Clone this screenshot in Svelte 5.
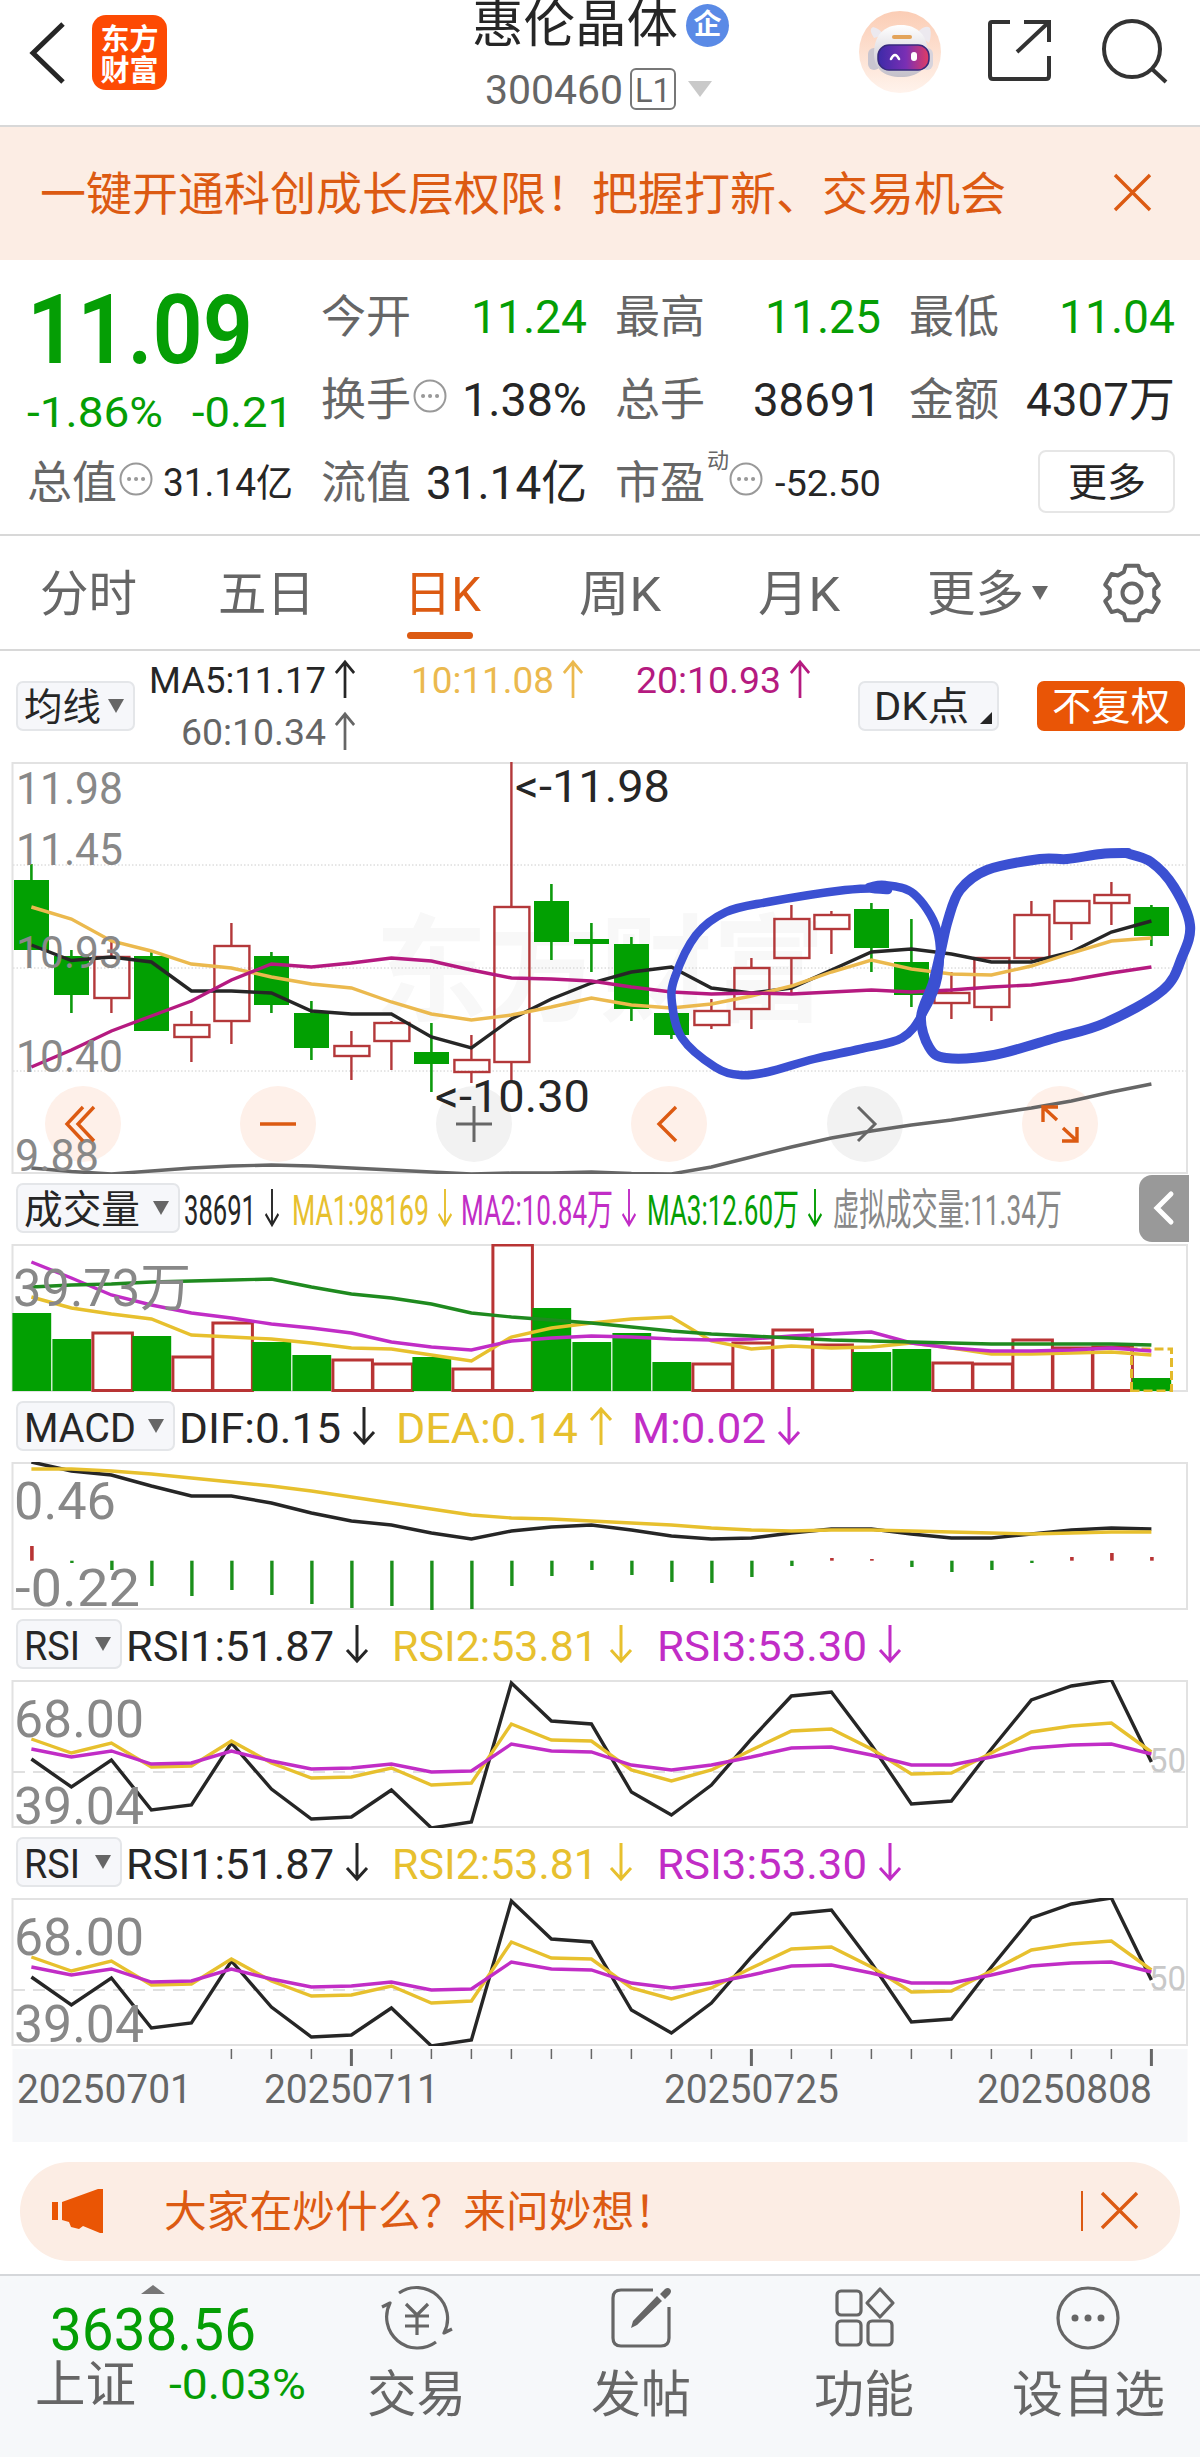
<script>
// x of the n-th trading day
const dayX = i => 31.4 + i * 40;

const line = ys => ys.map((y, i) => dayX(i) + "," + y).join(" ");

// closed smooth curve through points (catmull-rom)
function loop(pts)
{
	const n = pts.length;
	let d = "M" + pts[0];
	for(let i=0;i<n-1;i++)
	{
		const p0 = pts[Math.max(i-1,0)], p1 = pts[i], p2 = pts[i+1], p3 = pts[Math.min(i+2,n-1)];
		d += ` C${p1[0]+(p2[0]-p0[0])/6} ${p1[1]+(p2[1]-p0[1])/6} ${p2[0]-(p3[0]-p1[0])/6} ${p2[1]-(p3[1]-p1[1])/6} ${p2[0]} ${p2[1]}`;
	}
	return d;
}

function gear(teeth, r1, r2)
{
	const pts = [];
	for(let i=0;i<teeth;i++)
	{
		const a = -90 + i*360/teeth;
		[[-21,r2],[-13,r1],[13,r1],[21,r2]].forEach(([o,r]) => {
			const t = (a+o)*Math.PI/180;
			pts.push((r*Math.cos(t)).toFixed(1) + "," + (r*Math.sin(t)).toFixed(1));
		});
	}
	return pts.join(" ");
}

// [up?, body top, body bottom, high, low]
const candles = [
	[0,880,950,864,950],[0,956,995,950,1013],[1,957,998,941,1013],[0,956,1031,952,1031],[1,1025,1037,1011,1062],
	[1,946,1021,923,1044],[0,956,1005,952,1013],[0,1013,1048,1001,1060],[1,1046,1056,1031,1080],[1,1023,1041,1021,1070],
	[0,1052,1064,1023,1092],[1,1060,1072,1035,1083],[1,907,1062,762,1082],[0,901,942,884,960],[0,939,944,923,972],
	[0,944,1009,937,1021],[0,1013,1035,1013,1039],[1,1011,1025,999,1029],[1,968,1009,958,1029],[1,919,958,905,993],
	[1,915,929,911,954],[0,909,948,903,972],[0,962,995,919,1007],[1,993,1003,972,1019],[1,958,1007,958,1021],
	[1,915,958,901,960],[1,901,923,901,940],[1,895,903,882,925],[0,907,936,905,946]
];
const ma5 = [945,960.5,957,962,991,991,993,1011,1014,1014,1037,1048,1019,999,983,972,967,988,993,988,970,952,949,954,962,962,952,932,921];
const ma10 = [907,919,941,951,964,968,977,984,988,1002,1014,1020,1015,1007,998,1005,1008,1004,996,986,972,960,969,974,975,966,953,941,938];
const ma20 = [1067,1050,1031,1016,1001,980,964,967,963,958,961,970,978,979,981,987,992,994,993,994,992,990,992,990,987,985,980,973,967];
const ma60 = [1168,1171.5,1174,1171,1168,1166,1165,1166,1168,1170,1172,1174,1173,1173,1172,1173.5,1174,1167,1157,1147,1138,1131,1125,1120,1114,1108,1101,1092,1084];

const volTop = [1313,1339,1333,1336,1357,1323,1342,1355,1360,1364,1357,1369,1245,1308,1342,1333,1362,1364,1343,1330,1345,1352,1349,1363,1364,1340,1348,1347,1378];
const vol1 = [1297,1308,1314,1319,1335,1337,1339,1343,1348,1349,1355,1361,1337,1328,1323,1319,1317,1341,1349,1346,1348,1347,1343,1348,1354,1354,1353,1352,1355];
const vol2 = [1262,1278,1295,1305,1313,1318,1324,1328,1333,1342,1347,1350,1341,1338,1336,1337,1339,1340,1339,1336,1334,1332,1343,1348,1351,1351,1350,1348,1351];
const vol3 = [1287,1285,1284,1282,1281,1280,1279,1287,1294,1298,1304,1313,1317,1320,1323,1327,1331,1334,1336,1338,1340,1341,1342,1343,1344,1344,1344,1344,1345];

const dif = [1462,1471,1475,1486,1496,1496,1503,1513,1521,1525,1533,1539,1531,1527,1525,1530,1536,1539,1538,1533,1529,1529,1534,1538,1538,1534,1530,1528,1529];
const dea = [1469,1469,1471,1474,1478,1482,1486,1491,1497,1503,1509,1515,1518,1519,1521,1523,1525,1528,1530,1531,1530,1530,1531,1532,1533,1534,1533,1532,1532];
const macd = [1546,1563,1570,1586,1596,1590,1595,1604,1608,1606,1610,1609,1586,1576,1570,1575,1582,1583,1577,1566,1558,1559,1567,1572,1570,1563,1557,1553,1557];

const rsi1 = [1759,1787,1760,1810,1805,1743,1789,1819,1817,1790,1828,1822,1683,1721,1724,1792,1815,1785,1739,1696,1692,1745,1804,1801,1749,1700,1686,1680,1762];
const rsi2 = [1739,1753,1743,1767,1766,1741,1763,1778,1777,1768,1785,1783,1724,1740,1741,1770,1781,1770,1750,1731,1729,1749,1774,1773,1753,1732,1726,1723,1752];
const rsi3 = [1749,1757,1751,1764,1763,1751,1761,1769,1768,1764,1772,1771,1744,1751,1752,1765,1770,1765,1757,1748,1747,1755,1765,1765,1757,1748,1745,1744,1754];

const loopA = [[888,890],[868,888],[885,885],[914,894],[937,930],[938,977],[923,1013],[902,1038],[860,1049],[814,1059],[768,1072],[740,1075],[715,1067],[682,1038],[672,1003],[675,977],[696,935],[726,912],[768,902],[845,890],[885,888]];
const loopB = [[1126,853],[1151,862],[1174,887],[1190,925],[1182,957],[1163,990],[1105,1023],[1055,1038],[994,1055],[946,1058],[929,1047],[921,1017],[933,983],[941,950],[948,920],[960,890],[987,870],[1040,859],[1067,859],[1101,854],[1128,853]];

const prices = [["11.98",804,107],["11.45",865,107],["10.93",968,107],["10.40",1072,107]];

// slot = width taken in the header line, w = width of the text
const panels = [
	{ name: "成交量", nameW: 116, chip: 164, cls: "vol", items: [
		{ t: "38691", w: 72, slot: 108, c: "black", dir: "down" },
		{ t: "MA1:98169", w: 137, slot: 169, c: "yellow", dir: "down" },
		{ t: "MA2:10.84万", w: 152, slot: 186, c: "purple", dir: "down" },
		{ t: "MA3:12.60万", w: 152, slot: 186, c: "green", dir: "down" },
		{ t: "虚拟成交量:11.34万", w: 229, slot: 230, c: "grey" }
	]},
	{ name: "MACD", nameW: 112, chip: 159, items: [
		{ t: "DIF:0.15", w: 162, slot: 217, c: "black", dir: "down" },
		{ t: "DEA:0.14", w: 182, slot: 236, c: "yellow", dir: "up" },
		{ t: "M:0.02", w: 134, slot: 170, c: "purple", dir: "down" }
	]},
	{ name: "RSI", nameW: 56, chip: 106 },
	{ name: "RSI", nameW: 56, chip: 106 }
];
const rsiItems = [
	{ t: "RSI1:51.87", w: 208, slot: 265.5, c: "black", dir: "down" },
	{ t: "RSI2:53.81", w: 206, slot: 265.5, c: "yellow", dir: "down" },
	{ t: "RSI3:53.30", w: 210, slot: 265.5, c: "purple", dir: "down" }
];

const dates = [["20250701",17],["20250711",264],["20250725",664],["20250808",977]];
</script>

<!-- text squeezed or stretched to width w -->
{#snippet fit(text, w, size, c = "")}
	<svg class="fit {c}" width={w} height={size}><text x="0" y={size*0.88} font-size={size} textLength={w} lengthAdjust="spacingAndGlyphs">{text}</text></svg>
{/snippet}

{#snippet arrow(dir, c, w = 22)}
	<svg class="arrow {c}" width={w} height="38" viewBox="0 0 22 38" preserveAspectRatio="none"><path d={dir=="up" ? "M11 38V2M1 13L11 2L21 13" : "M11 0V36M1 25L11 36L21 25"}/></svg>
{/snippet}

{#snippet more()}
	<svg class="more" width="34" height="34" viewBox="0 0 34 34"><circle cx="17" cy="17" r="15.5"/><path d="M10 17h.1M17 17h.1M24 17h.1"/></svg>
{/snippet}

{#snippet tri()}
	<svg class="tri" width="16" height="14" viewBox="0 0 16 14"><path d="M0 0H16L8 14Z"/></svg>
{/snippet}

<main>
	<header>
		<svg class="back" width="38" height="62" viewBox="0 0 38 62"><path d="M34 2L4 31L34 60"/></svg>
		<div class="logo"><span>东方</span><span>财富</span></div>
		<div class="title">
			<div class="name">{@render fit("惠伦晶体", 206, 51)}<b class="badge">企</b></div>
			<div class="code">{@render fit("300460", 138, 40)}<span class="level">{@render fit("L1", 36, 34)}</span>
				<svg width="24" height="16" viewBox="0 0 24 16"><path d="M0 0H24L12 16Z" fill="#c9c9c9"/></svg>
			</div>
		</div>
		<svg class="robot" width="82" height="82" viewBox="0 0 82 82">
			<defs>
				<linearGradient id="halo" x1="0" y1="0" x2="0" y2="1"><stop offset="0" stop-color="#fbcdb5"/><stop offset="1" stop-color="#fff3ec"/></linearGradient>
				<linearGradient id="visor" x1="0" y1="0" x2="1" y2="0"><stop offset="0" stop-color="#3d2aa8"/><stop offset=".55" stop-color="#7a2fb4"/><stop offset="1" stop-color="#e23c63"/></linearGradient>
				<linearGradient id="shell" x1="0" y1="0" x2="0" y2="1"><stop offset="0" stop-color="#fff"/><stop offset="1" stop-color="#c3bfc9"/></linearGradient>
			</defs>
			<circle cx="41" cy="41" r="41" fill="url(#halo)"/>
			<path d="M15 27Q9 18 14 16Q20 17 25 24ZM58 22Q66 13 71 17Q73 24 70 32Z" fill="#ece9ef"/>
			<rect x="9" y="37" width="12" height="22" rx="6" fill="#c9c5cf"/>
			<rect x="62" y="37" width="12" height="22" rx="6" fill="#d7d3dc"/>
			<path d="M42 14C58 14 69 24 69 43C69 58 58 66 42 66C25 66 15 58 15 43C15 24 25 14 42 14Z" fill="url(#shell)"/>
			<rect x="33" y="24" width="20" height="4" rx="2" fill="#e3a45b"/>
			<rect x="19" y="34" width="51" height="25" rx="11" fill="url(#visor)" stroke="#372a7e" stroke-width="1.5"/>
			<path d="M32 48Q36 40 40 48" fill="none" stroke="#fff" stroke-width="2.6" stroke-linecap="round"/>
			<rect x="52" y="41" width="6" height="9" rx="3" fill="#fff"/>
		</svg>
		<svg class="share" width="66" height="66" viewBox="0 0 66 66"><path d="M24 4H6Q4 4 4 6V58Q4 61 7 61H60Q63 61 63 58V38M38 4H63V24M63 4L31 34"/></svg>
		<svg class="search" width="68" height="66" viewBox="0 0 68 66"><circle cx="31" cy="31" r="28"/><path d="M51 51L65 64"/></svg>
	</header>

	<div class="banner">
		{@render fit("一键开通科创成长层权限！把握打新、交易机会", 966, 46)}
		<svg class="close" width="37" height="37" viewBox="0 0 37 37"><path d="M1 1L36 36M36 1L1 36"/></svg>
	</div>

	<section class="quote">
		<div class="price">
			{@render fit("11.09", 226, 97, "green bold")}
			<div class="change">{@render fit("-1.86%", 136, 42, "green")}{@render fit("-0.21", 101, 42, "green")}</div>
		</div>
		<div class="cell">{@render fit("今开", 90, 45)}{@render fit("11.24", 116, 47, "green")}</div>
		<div class="cell">{@render fit("最高", 90, 45)}{@render fit("11.25", 116, 47, "green")}</div>
		<div class="cell">{@render fit("最低", 90, 45)}{@render fit("11.04", 116, 47, "green")}</div>
		<div class="cell"><span>{@render fit("换手", 90, 45)}{@render more()}</span>{@render fit("1.38%", 125, 47, "black")}</div>
		<div class="cell">{@render fit("总手", 90, 45)}{@render fit("38691", 128, 47, "black")}</div>
		<div class="cell">{@render fit("金额", 90, 45)}{@render fit("4307万", 149, 47, "black")}</div>
		<div class="cell"><span>{@render fit("总值", 90, 45)}{@render more()}</span>{@render fit("31.14亿", 130, 38, "black")}</div>
		<div class="cell">{@render fit("流值", 90, 45)}{@render fit("31.14亿", 161, 47, "black")}</div>
		<div class="cell"><span>{@render fit("市盈", 90, 45)}<sup>动</sup>{@render more()}</span>{@render fit("-52.50", 106, 37, "black")}</div>
		<div class="cell last"><button>{@render fit("更多", 78, 39)}</button></div>
	</section>

	<nav class="tabs">
		<span>{@render fit("分时", 97, 49)}</span>
		<span>{@render fit("五日", 97, 49)}</span>
		<span class="active">{@render fit("日K", 77, 49)}</span>
		<span>{@render fit("周K", 82, 49)}</span>
		<span>{@render fit("月K", 82, 49)}</span>
		<span class="drop">{@render fit("更多", 97, 49)}{@render tri()}</span>
		<svg class="gear" width="62" height="62" viewBox="-31 -31 62 62"><polygon points={gear(6, 28, 22.5)}/><circle r="9.5"/></svg>
	</nav>

	<div class="legend">
		<span class="chip avg">{@render fit("均线", 77, 38)}{@render tri()}</span>
		<div class="averages">
			<span class="r">{@render fit("MA5:11.17", 177, 37, "black")}{@render arrow("up", "black", 20)}</span>
			<span>{@render fit("10:11.08", 143, 37, "amber")}{@render arrow("up", "amber", 20)}</span>
			<span>{@render fit("20:10.93", 145, 37, "magenta")}{@render arrow("up", "magenta", 20)}</span>
			<span class="r">{@render fit("60:10.34", 145, 37, "dim")}{@render arrow("up", "dim", 20)}</span>
		</div>
		<span class="chip dk">{@render fit("DK点", 95, 39)}<svg width="12" height="12" viewBox="0 0 12 12"><path d="M12 0V12H0Z"/></svg></span>
		<span class="chip adjust">{@render fit("不复权", 118, 39)}</span>
	</div>

	<svg class="chart" width="1200" height="412" viewBox="0 762 1200 412">
		<text class="watermark" x="375" y="1012" textLength="450" lengthAdjust="spacingAndGlyphs">东方财富</text>
		{#each [865, 968, 1071] as y}
			<path class="dotted" d="M13 {y}H1187"/>
		{/each}
		{#each [83, 278, 474, 669, 865, 1060] as x, i}
			<circle cx={x} cy="1124" r="38" fill={i==2||i==4 ? "#f2f2f2" : "#fef0e9"}/>
		{/each}
		<rect class="frame" x="12.5" y="763" width="1174.5" height="410"/>
		{#each candles as [up, top, bottom, high, low], i}
			{#if up}
				<g class="up">
					<path d="M{dayX(i)} {high}V{top}M{dayX(i)} {bottom}V{low}"/>
					<rect x={dayX(i)-17} y={top} width="35" height={bottom-top}/>
				</g>
			{:else}
				<g class="down">
					<path d="M{dayX(i)} {high}V{low}"/>
					<rect x={dayX(i)-17.4} y={top} width="35" height={bottom-top}/>
				</g>
			{/if}
		{/each}
		<polyline class="dim" points={line(ma60)}/>
		<polyline class="black" points={line(ma5)}/>
		<polyline class="amber" points={line(ma10)}/>
		<polyline class="magenta" points={line(ma20)}/>
		{#each prices as [t, y, w]}
			<text class="scale" x="16" {y} font-size="45" textLength={w} lengthAdjust="spacingAndGlyphs">{t}</text>
		{/each}
		<text class="scale" x="15" y="1171" font-size="45" textLength="84" lengthAdjust="spacingAndGlyphs">9.88</text>
		<text class="mark" x="515" y="802" textLength="155" lengthAdjust="spacingAndGlyphs">&lt;-11.98</text>
		<text class="mark" x="435" y="1112" textLength="155" lengthAdjust="spacingAndGlyphs">&lt;-10.30</text>
		<g class="tools">
			<path d="M83 1107L67 1124L83 1141M94 1107L78 1124L94 1141M260 1124H296M676 1107L659 1124L676 1141"/>
			<path d="M1043 1122V1107H1058M1043 1107L1057 1120M1077 1127V1141H1062M1077 1141L1063 1128"/>
			<path class="off" d="M456 1124H492M474 1106V1142M858 1107L875 1124L858 1141"/>
		</g>
		<path class="pen" d={loop(loopA)}/>
		<path class="pen wide" d={loop(loopB)}/>
	</svg>

	{#each panels as p, n}
		<div class="head {p.cls}">
			<span class="chip" style:width="{p.chip}px">{@render fit(p.name, p.nameW, n ? 41 : 39)}{@render tri()}</span>
			{#each p.items ?? rsiItems as item}
				<span class="item" style:width="{item.slot}px">
					{@render fit(item.t, item.w, 43, item.c)}
					{#if item.dir}{@render arrow(item.dir, item.c, n ? 22 : 14)}{/if}
				</span>
			{/each}
			{#if n==0}
				<span class="collapse"><svg width="20" height="34" viewBox="0 0 20 34"><path d="M17 3L3 17L17 31"/></svg></span>
			{/if}
		</div>
		{#if n==0}
			<svg class="chart" width="1200" height="148" viewBox="0 1244 1200 148">
				<rect class="frame" x="12.5" y="1245" width="1174.5" height="146"/>
				{#each volTop as y, i}
					{#if candles[i][0]}
						<rect class="volup" x={dayX(i)-18.5} {y} width="39.5" height={1390.5-y}/>
					{:else}
						<rect class="voldown" x={dayX(i)-19} {y} width="38.8" height={1391-y}/>
					{/if}
				{/each}
				<path class="guess" d="M1131.5 1391V1349H1171.5V1391Z"/>
				<polyline class="yellow" points={line(vol1)}/>
				<polyline class="purple" points={line(vol2)}/>
				<polyline class="leaf" points={line(vol3)}/>
				<text class="scale" x="13" y="1306" font-size="52" textLength="178" lengthAdjust="spacingAndGlyphs">39.73万</text>
			</svg>
		{:else if n==1}
			<svg class="chart" width="1200" height="148" viewBox="0 1462 1200 148">
				<rect class="frame" x="12.5" y="1463" width="1174.5" height="146"/>
				{#each macd as y, i}
					<path class={y<1560 ? "rise" : "fall"} d="M{dayX(i)+.5} 1560.7V{y}"/>
				{/each}
				<polyline class="black" points={line(dif)}/>
				<polyline class="yellow" points={line(dea)}/>
				<text class="scale" x="14" y="1519" font-size="52" textLength="102" lengthAdjust="spacingAndGlyphs">0.46</text>
				<text class="scale" x="15" y="1606" font-size="52" textLength="125" lengthAdjust="spacingAndGlyphs">-0.22</text>
			</svg>
		{:else}
			<svg class="chart" width="1200" height="148" viewBox="0 1680 1200 148">
				<rect class="frame" x="12.5" y="1681" width="1174.5" height="146"/>
				<path class="dashed" d="M13 1772H1187"/>
				<text class="fifty" x="1149" y="1772" textLength="37" lengthAdjust="spacingAndGlyphs">50</text>
				<polyline class="black" points={line(rsi1)}/>
				<polyline class="yellow" points={line(rsi2)}/>
				<polyline class="purple" points={line(rsi3)}/>
				<text class="scale" x="14" y="1737" font-size="52" textLength="130" lengthAdjust="spacingAndGlyphs">68.00</text>
				<text class="scale" x="14" y="1824" font-size="52" textLength="130" lengthAdjust="spacingAndGlyphs">39.04</text>
			</svg>
		{/if}
	{/each}

	<svg class="chart axis" width="1200" height="96" viewBox="0 2046 1200 96">
		<rect x="12.5" y="2049" width="1175" height="93" fill="#f7f8fa"/>
		{#each candles as _, i}
			{#if i>4}
				<path d="M{dayX(i)} 2049V{i%10==8 ? 2066 : 2059}" stroke-width={i%10==8 ? 3 : 1.5}/>
			{/if}
		{/each}
		{#each dates as [t, x]}
			<text {x} y="2103" font-size="41" textLength="175" lengthAdjust="spacingAndGlyphs">{t}</text>
		{/each}
	</svg>

	<div class="ask">
		<svg class="horn" width="52" height="44" viewBox="0 0 52 44"><path d="M0 13H6V31H0ZM10 13L46 0H51V44H48L31 37L27 40L19 38L17 33L10 31Z"/></svg>
		{@render fit("大家在炒什么？来问妙想！", 513, 43)}
		<i></i>
		<svg class="close" width="37" height="37" viewBox="0 0 37 37"><path d="M1 1L36 36M36 1L1 36"/></svg>
	</div>

	<footer>
		<div class="index">
			<svg width="24" height="9" viewBox="0 0 24 9"><path d="M0 9L12 0L24 9Z" fill="#777"/></svg>
			{@render fit("3638.56", 206, 59, "green")}
			<div class="sub">{@render fit("上证", 101, 50)}{@render fit("-0.03%", 137, 42, "green")}</div>
		</div>
		<div class="entry">
			<svg width="76" height="66" viewBox="-38 -33 76 66"><path d="M-18 -25A31 31 0 0 1 27 15L35 11M19 24A31 31 0 0 1 -27 -15L-35 -11M-11 -14L0 -3L11 -14M0 -3V17M-12 -2H12M-12 8H12"/></svg>
			{@render fit("交易", 99, 50)}
		</div>
		<div class="entry">
			<svg width="76" height="66" viewBox="-38 -33 76 66"><path d="M12 -28H-20Q-28 -28 -28 -20V20Q-28 28 -20 28H20Q28 28 28 20V-11"/><path class="solid" d="M16 -22L21 -17L-4 7L-10 10L-8 3ZM19 -24L24 -29Q27 -31 29 -29Q31 -27 29 -24L24 -19Z"/></svg>
			{@render fit("发帖", 100, 50)}
		</div>
		<div class="entry">
			<svg width="76" height="66" viewBox="-38 -33 76 66"><rect x="-27" y="-27" width="24" height="24" rx="4"/><rect x="-27" y="3" width="24" height="24" rx="4"/><rect x="4" y="3" width="24" height="24" rx="4"/><path d="M16 -29L29 -15L16 -1L3 -15Z"/></svg>
			{@render fit("功能", 100, 50)}
		</div>
		<div class="entry">
			<svg width="76" height="66" viewBox="-38 -33 76 66"><circle r="30"/><circle class="solid" cx="-13" r="3.5"/><circle class="solid" r="3.5"/><circle class="solid" cx="13" r="3.5"/></svg>
			{@render fit("设自选", 153, 50)}
		</div>
	</footer>
</main>

<style>
:global(body) {margin: 0; background: #fff;}

main {
	width: 1200px;
	height: 2457px;
	overflow: hidden;
	display: flex;
	flex-direction: column;
	color: #666;
	font-family: Roboto, "Noto Sans CJK SC", sans-serif;
}
main > * {flex: none; box-sizing: border-box;}

svg {display: block; flex: none; overflow: visible; fill: none;}
svg text {fill: currentColor;}
.fit.bold {font-weight: 600;}

.green {color: #059e05;}
.black {color: #262626;}
.amber {color: #ebb94e;}
.magenta {color: #b51a80;}
.yellow {color: #e7c02e;}
.purple {color: #c12dc6;}
.leaf {color: #1f8a1f;}
.dim {color: #666;}
.grey {color: #888;}

.arrow {stroke: currentColor; stroke-width: 3;}
.more circle {stroke: #999; stroke-width: 2;}
.more path {stroke: #999; stroke-width: 4; stroke-linecap: round;}
.tri path {fill: #666;}

/* top bar */
header {
	height: 127px;
	border-bottom: 2px solid #d8d8d8;
	display: flex;
	align-items: flex-start;
	padding-left: 29px;
	color: #262626;
}
.back {margin-top: 22px; stroke: #262626; stroke-width: 5;}
.logo {
	width: 75px;
	height: 75px;
	margin: 15px 0 0 25px;
	border-radius: 14px;
	background: #fd4a03;
	color: #fff;
	display: flex;
	flex-direction: column;
	align-items: center;
	justify-content: center;
	font: bold 29px/31px "Noto Sans CJK SC", sans-serif;
}
.title {width: 256px; margin-left: 305px;}
.name {display: flex; gap: 8px; height: 65px; margin-top: -3px;}
.badge {
	flex: none;
	width: 43px;
	height: 43px;
	margin-top: 7px;
	border-radius: 50%;
	background: #5a8ae6;
	color: #fff;
	font-size: 28px;
	line-height: 41px;
	text-align: center;
}
.code {display: flex; align-items: center; margin: 6px 0 0 13px; color: #666;}
.level {
	border: 2px solid #777;
	border-radius: 6px;
	padding: 2px 3px;
	margin: 0 12px 0 7px;
}
.robot {margin: 11px 0 0 131px;}
.share {margin: 18px 0 0 45px; stroke: #333; stroke-width: 4;}
.search {margin: 18px 0 0 49px; stroke: #333; stroke-width: 4;}

.banner {
	height: 133px;
	padding: 0 49px 2px 40px;
	display: flex;
	align-items: center;
	justify-content: space-between;
	background: #fcede4;
	color: #dc5a12;
}
.close {stroke: #dc5a12; stroke-width: 3.4;}

/* quote */
.quote {
	height: 276px;
	padding: 14px 25px 12px 27px;
	border-bottom: 2px solid #d8d8d8;
	display: grid;
	grid-template-columns: repeat(4, 266px);
	grid-template-rows: repeat(3, 83px);
	column-gap: 28px;
}
.price {grid-row: span 2; display: flex; flex-direction: column; padding-top: 4px;}
.change {display: flex; justify-content: space-between; margin-top: 15px;}
.cell {display: flex; align-items: center; justify-content: space-between;}
.cell span {display: flex; align-items: center;}
.cell span .more {margin-left: 2px; margin-top: -6px;}
.cell sup {font-size: 22px; line-height: 22px; margin: 0 -2px 42px 2px;}
.last {justify-content: flex-end;}
button {
	width: 137px;
	height: 63px;
	padding: 0;
	display: flex;
	align-items: center;
	justify-content: center;
	background: #fff;
	border: 2px solid #e6e6e6;
	border-radius: 8px;
	color: #262626;
	font-family: inherit;
}

.tabs {
	height: 115px;
	padding: 0 37px 0 40px;
	border-bottom: 2px solid #d8d8d8;
	display: flex;
	align-items: center;
}
.tabs span {margin-right: 81px; display: flex;}
.tabs .active {color: #dc5a12; position: relative; margin: 0 98px 0 8px;}
.active::after {
	content: "";
	position: absolute;
	left: 3px;
	top: 64px;
	width: 66px;
	height: 7px;
	border-radius: 4px;
	background: #dc5a12;
}
.tabs span:nth-child(4) {margin-right: 97px;}
.tabs span:nth-child(5) {margin-right: 87px;}
.tabs .drop {align-items: center; gap: 8px; margin: 0 auto 0 0;}
.gear polygon, .gear circle {stroke: #666; stroke-width: 4; stroke-linejoin: round;}

.legend {
	height: 111px;
	display: flex;
	align-items: center;
	padding: 0 15px 2px 16px;
}
.chip {
	height: 50px;
	box-sizing: border-box;
	flex: none;
	display: flex;
	align-items: center;
	justify-content: space-between;
	padding: 0 9px 0 6px;
	background: #f6f7fa;
	border: 2px solid #e4e6e9;
	border-radius: 7px;
	color: #262626;
}
.avg {width: 119px;}
.averages {
	width: 709px;
	margin-left: 12px;
	display: grid;
	grid-template-columns: 208px 225px 1fr;
	row-gap: 14px;
	padding-bottom: 2px;
}
.averages span {display: flex; align-items: center; gap: 9px; padding-left: 56px;}
.averages .r {justify-content: flex-end; padding: 0;}
.dk {width: 141px; padding: 0 5px 0 14px; margin-left: 2px;}
.dk > svg:last-child {margin-top: 24px;}
.dk path {fill: #262626;}
.adjust {width: 148px; margin-left: auto; background: #e95506; border-color: #e95506; color: #fff; justify-content: center; padding: 0;}

/* charts */
.chart {overflow: hidden;}
.frame {stroke: #e2e2e2; stroke-width: 2;}
.dotted {stroke: #ccc; stroke-width: 1; stroke-dasharray: 1.5 2;}
.dashed {stroke: #e0e0e0; stroke-width: 2; stroke-dasharray: 12 8;}
polyline {stroke: currentColor; stroke-width: 3.4;}
.up {fill: none; stroke: #b3383a; stroke-width: 2.4;}
.down {fill: #02a002; stroke: none;}
.down path {stroke: #0d9a0d; stroke-width: 2.6;}
.volup {stroke: #b83434; stroke-width: 3;}
.voldown {fill: #02a002;}
.guess {stroke: #e3ba2c; stroke-width: 3; stroke-dasharray: 9 4;}
.rise {stroke: #b83434; stroke-width: 3.6;}
.fall {stroke: #1b8f1b; stroke-width: 3.4;}
svg .scale {fill: #888;}
svg .mark {fill: #262626; font-size: 44px;}
svg .fifty {fill: #c8c8c8; font-size: 33px;}
svg .watermark {fill: #f8f8f8; font-size: 116px; font-weight: 700;}
.tools {stroke: #dc5a12; stroke-width: 3.4;}
.tools .off {stroke: #666; stroke-width: 3;}
.pen {stroke: #3b50d2; stroke-width: 8.5; stroke-linejoin: round; stroke-linecap: round;}
.pen.wide {stroke-width: 10;}

.head {height: 70px; display: flex; align-items: center; padding: 0 0 2px 16px;}
.head .chip {margin-right: 4px;}
.item {display: flex; align-items: center; gap: 12px; flex: none;}
.vol .item {gap: 9px;}
.collapse {
	width: 50px;
	height: 67px;
	margin: 0 11px 0 auto;
	border-radius: 13px 0 0 13px;
	background: #999;
	display: flex;
	align-items: center;
	justify-content: center;
}
.collapse path {stroke: #fff; stroke-width: 5; stroke-linecap: round;}
.axis path {stroke: #666;}

.ask {
	height: 99px;
	margin: 20px 20px 13px;
	padding: 0 42px 2px 32px;
	border-radius: 50px;
	background: #fcede4;
	color: #dc5a12;
	display: flex;
	align-items: center;
}
.horn {fill: #ea5504; margin-right: 60px;}
.ask i {width: 2px; height: 40px; margin: 0 18px 0 auto; background: #dc5a12;}

footer {
	height: 183px;
	border-top: 2px solid #d5d7da;
	background: #f6f8fa;
	display: flex;
}
.index {width: 305px; display: flex; flex-direction: column; align-items: center; padding-top: 9px;}
.index > .fit {margin-top: 4px;}
.sub {display: flex; align-items: center; justify-content: space-between; width: 271px; margin: 1px 0 0 36px;}
.entry {width: 223.8px; display: flex; flex-direction: column; align-items: center; padding-top: 9px; gap: 17px;}
.entry svg:first-child {stroke: #666; stroke-width: 3.2; stroke-linejoin: round;}
.entry .solid {fill: #666; stroke: none;}
</style>
